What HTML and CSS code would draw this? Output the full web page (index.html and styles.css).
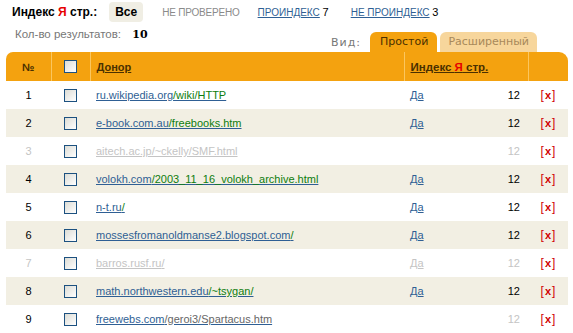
FILE: index.html
```html
<!DOCTYPE html>
<html>
<head>
<meta charset="utf-8">
<link rel="stylesheet" href="styles.css">
</head>
<body>
<div class="top">
  <span class="title">Индекс <span class="ya">Я</span> стр.:</span>
  <span class="pill">Все</span>
  <span class="muted">НЕ ПРОВЕРЕНО</span>
  <span class="flt"><a href="#">ПРОИНДЕКС</a> <span class="n">7</span></span>
  <span class="flt"><a href="#">НЕ ПРОИНДЕКС</a> <span class="n">3</span></span>
</div>
<div class="row2">
  <div class="count">Кол-во результатов: <b>10</b></div>
  <div class="view">
    <span class="view-label">Вид:</span>
    <span class="tab active">Простой</span>
    <span class="tab ext">Расширенный</span>
  </div>
</div>
<table class="grid">
  <colgroup>
    <col class="c-num"><col class="c-chk"><col class="c-don"><col class="c-idx"><col class="c-del">
  </colgroup>
  <thead>
    <tr>
      <th class="num first">№</th>
      <th class="chk"><span class="box"></span></th>
      <th class="don"><a href="#">Донор</a></th>
      <th class="idx"><a href="#">Индекс <span class="ya">Я</span> стр.</a></th>
      <th class="del last"></th>
    </tr>
  </thead>
  <tbody>
    <tr><td class="num">1</td><td class="chk"><span class="box"></span></td><td class="don"><a href="#">ru.wikipedia.org<span class="p">/wiki/HTTP</span></a></td><td class="idx"><div class="ic"><a href="#">Да</a><span>12</span></div></td><td class="del">[<b>x</b>]</td></tr>
    <tr class="alt"><td class="num">2</td><td class="chk"><span class="box"></span></td><td class="don"><a href="#">e-book.com.au<span class="p">/freebooks.htm</span></a></td><td class="idx"><div class="ic"><a href="#">Да</a><span>12</span></div></td><td class="del">[<b>x</b>]</td></tr>
    <tr class="off"><td class="num">3</td><td class="chk"><span class="box"></span></td><td class="don"><a href="#">aitech.ac.jp/~ckelly/SMF.html</a></td><td class="idx"><div class="ic"><span></span><span>12</span></div></td><td class="del">[<b>x</b>]</td></tr>
    <tr class="alt"><td class="num">4</td><td class="chk"><span class="box"></span></td><td class="don"><a href="#">volokh.com<span class="p">/2003_11_16_volokh_archive.html</span></a></td><td class="idx"><div class="ic"><a href="#">Да</a><span>12</span></div></td><td class="del">[<b>x</b>]</td></tr>
    <tr><td class="num">5</td><td class="chk"><span class="box"></span></td><td class="don"><a href="#">n-t.ru<span class="p">/</span></a></td><td class="idx"><div class="ic"><a href="#">Да</a><span>12</span></div></td><td class="del">[<b>x</b>]</td></tr>
    <tr class="alt"><td class="num">6</td><td class="chk"><span class="box"></span></td><td class="don"><a href="#">mossesfromanoldmanse2.blogspot.com<span class="p">/</span></a></td><td class="idx"><div class="ic"><a href="#">Да</a><span>12</span></div></td><td class="del">[<b>x</b>]</td></tr>
    <tr class="off"><td class="num">7</td><td class="chk"><span class="box"></span></td><td class="don"><a href="#">barros.rusf.ru<span class="p">/</span></a></td><td class="idx"><div class="ic"><a href="#">Да</a><span>12</span></div></td><td class="del">[<b>x</b>]</td></tr>
    <tr class="alt"><td class="num">8</td><td class="chk"><span class="box"></span></td><td class="don"><a href="#">math.northwestern.edu<span class="p">/~tsygan/</span></a></td><td class="idx"><div class="ic"><a href="#">Да</a><span>12</span></div></td><td class="del">[<b>x</b>]</td></tr>
    <tr><td class="num">9</td><td class="chk"><span class="box"></span></td><td class="don"><a href="#">freewebs.com<span class="g">/geroi3/Spartacus.htm</span></a></td><td class="idx"><div class="ic"><span></span><span class="gray">12</span></div></td><td class="del">[<b>x</b>]</td></tr>
  </tbody>
</table>
</body>
</html>
```
FILE: styles.css
```css
* { box-sizing: border-box; }
body {
  margin: 0;
  font-family: "Liberation Sans", Arial, sans-serif;
  font-size: 11px;
  color: #000;
  background: #fff;
}
a { color: #2f5f94; text-decoration: underline; }
.ya { color: #e60000; }

.top {
  height: 24px;
  display: flex;
  align-items: center;
  padding-left: 12px;
}
.title { font-weight: bold; font-size: 12px; margin-right: 12px; }
.pill {
  font-weight: bold;
  font-size: 12px;
  background: #f0eee4;
  border-radius: 4px;
  padding: 3px 6px;
  margin-right: 19px;
}
.muted { color: #8a8a8a; font-size: 10px; margin-right: 18px; letter-spacing: -0.2px; }
.flt { margin-right: 22px; font-size: 10px; }
.flt .n { font-size: 11px; }

.row2 {
  height: 28px;
  display: flex;
  justify-content: space-between;
  padding-left: 15px;
  padding-right: 36px;
}
.count { color: #777; margin-top: 4px; font-size: 11.5px; }
.count b {
  color: #000;
  margin-left: 8px;
  font-family: "DejaVu Serif", serif;
  font-size: 11px;
}
.view {
  display: flex;
  align-items: flex-end;
  gap: 3px;
}
.view-label {
  color: #777;
  font-family: "DejaVu Sans", sans-serif;
  letter-spacing: 1px;
  margin-right: 6px;
  padding-bottom: 3px;
}
.tab {
  height: 20px;
  line-height: 20px;
  padding: 0 9px 0 10px;
  border-radius: 6px 6px 0 0;
  background: #f7d69c;
  color: #a8895a;
  font-family: "DejaVu Sans", sans-serif;
  font-size: 11px;
}
.tab.ext { padding: 0 8px; }
.tab.active { background: #f4a20f; color: #4a3000; }

.grid {
  margin-left: 6px;
  width: 562px;
  border-collapse: collapse;
  table-layout: fixed;
}
.c-num { width: 45px; }
.c-chk { width: 39px; }
.c-don { width: 314px; }
.c-idx { width: 124px; }
.c-del { width: 40px; }

.grid th {
  background: #f4a20f;
  height: 29px;
  padding: 0;
  text-align: left;
  font-weight: bold;
  color: #4a3000;
  border-left: 1px solid #fbc65e;
}
.grid th.first { border-left: none; border-top-left-radius: 7px; text-align: center; }
.grid th.chk { text-align: center; }
.grid th.last { border-top-right-radius: 9px; }
.grid th a { color: #4a3000; }
.grid th.don, .grid th.idx { padding-left: 6px; }
.grid th.idx { font-size: 11.5px; }
.grid td {
  height: 28px;
  padding: 0;
}
.grid tr.alt td { background: #f2efe3; }
.num { text-align: center; }
.chk { text-align: center; }
.box {
  display: inline-block;
  width: 13px;
  height: 13px;
  border: 1px solid #1c5180;
  background: linear-gradient(135deg, #dcdcd5, #ffffff);
  vertical-align: middle;
}
.grid td.don { padding-left: 6px; white-space: nowrap; }
.p { color: #0e7d0e; }
.g { color: #666; }
.ic {
  display: flex;
  justify-content: space-between;
  padding-left: 6px;
  padding-right: 8px;
}
.del { text-align: center; color: #d00000; font-size: 12px; padding-right: 1px; }
.del b { font-size: 11px; padding: 0 1px; }
tr.off td, tr.off td a, tr.off .p { color: #c4c4c4; }
tr.off td.del { color: #d00000; }
.gray { color: #c4c4c4; }
```
